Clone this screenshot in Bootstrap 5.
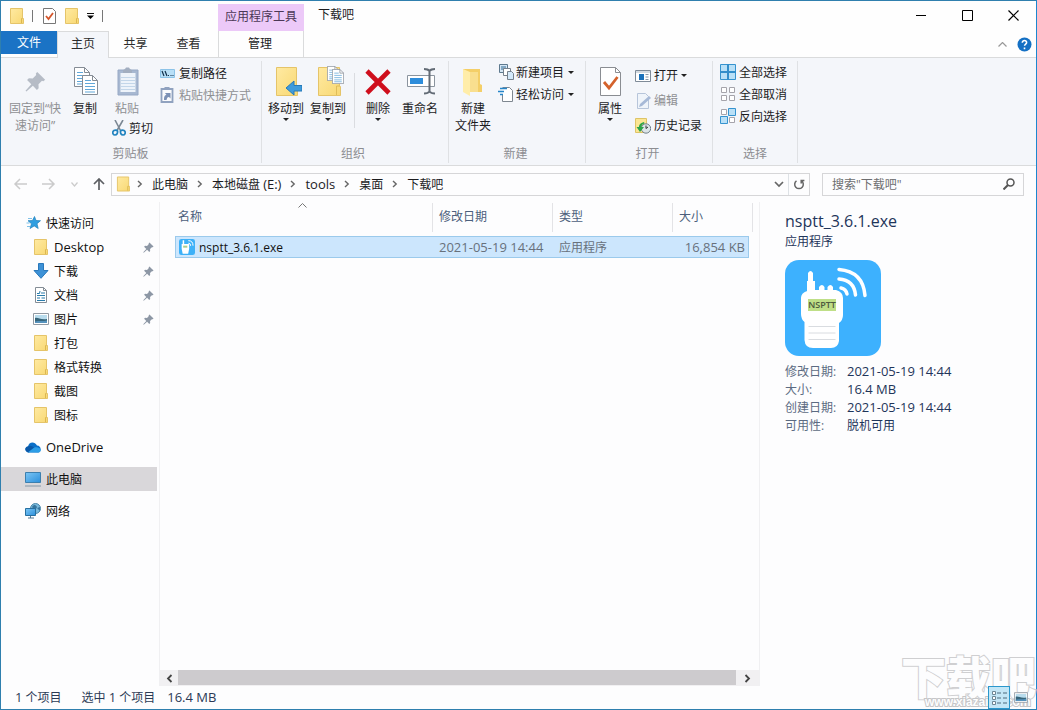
<!DOCTYPE html>
<html lang="zh-CN">
<head>
<meta charset="utf-8">
<meta name="viewport" content="width=device-width, initial-scale=1">
<title>下载吧</title>
<link rel="stylesheet" href="https://cdn.jsdelivr.net/npm/bootstrap@5.3.0/dist/css/bootstrap.min.css">
<style>
  body { font: 12px/17px "Open Sans", "Noto Sans CJK SC", sans-serif; color: #1c1c1e; background: #fdfdfe; }
  svg { display: block; flex: none; }
  button, input { font: inherit; }
  a { color: inherit; text-decoration: none; }
  .latin { font-size: 13px; }
  .window { border: 1px solid #2f7fae; border-right-color: #1b87d0; }
  .plain { border: 0; background: none; padding: 0; color: inherit; }
  .plain:disabled { color: #8f9093; }
  .plain:disabled svg { opacity: .6; }

  /* title bar and tabs */
  .top-grid { display: grid; grid-template-columns: 217px 86px 1fr; grid-template-rows: 30px 27px; background: #fefefe; }
  .quick { padding: 0 8px; gap: 8px; }
  .quick i { width: 1px; height: 12px; background: #777; }
  .quick i + button { margin-left: 2px; }
  .context-title { background: #ecc9f8; margin-top: 3px; padding-top: 4px; color: #4b3856; white-space: nowrap; }
  .caption-text { padding: 5px 0 0 14px; }
  .tabs { border-bottom: 1px solid #dadbdc; }
  .tabs .nav-link { padding: 4px 0; border: 0; border-radius: 0; width: 53px; text-align: center; color: #2b2b2b; }
  .tabs .file { width: 56px; background: #1b73c5; color: #fff; height: 23px; padding-top: 3px; }
  .tabs .nav-link.active { width: 52px; margin-bottom: -1px; background: #f4f6fa; color: #2b2b2b; border: 1px solid #dadbdc; border-bottom: 0; padding-top: 3px; }
  .manage { border: 1px solid #dadbdc; border-top: 0; text-align: center; padding: 4px 2px 0 0; }
  .tools { gap: 10px; padding-right: 4px; }
  .win-btn { width: 46px; height: 28px; display: grid; place-items: center; }

  /* ribbon */
  .ribbon { background: #f4f6fa; border-bottom: 1px solid #dadbdc; height: 108px; }
  .rgroup { border-right: 1px solid #dfe1e4; margin: 3px 0 2px; display: flex; flex-direction: column; }
  .rgroup > footer { text-align: center; color: #8c8d91; margin: auto 0 0 -4px; padding-bottom: 1px; }
  .w-clip { width: 261px; padding-left: 3px; } .w-org { width: 187px; padding-left: 3px; }
  .w-new { width: 137px; padding-left: 1px; } .w-open { width: 127px; padding-left: 1px; } .w-sel { width: 85px; padding-left: 7px; }
  .w-org > footer, .w-sel > footer { margin-left: -7px; }
  .big { display: flex; flex-direction: column; align-items: center; padding-top: 5px; }
  .big svg.ico { margin-bottom: 2px; }
  .b62 { width: 62px; } .b38 { width: 38px; } .b46 { width: 46px; } .b42 { width: 42px; }
  .small-btn { display: flex; align-items: center; gap: 3px; height: 22px; white-space: nowrap; }
  .rows { margin-left: 2px; }
  .clip-rows { margin-left: 7px; padding-top: 1px; }
  .tall { padding-top: 2px; }
  .tall .small-btn { height: 25px; }
  .drop { width: 0; border: 3px solid transparent; border-top-color: #222; border-bottom: 0; }
  .big .drop { margin-top: 1px; }
  .small-btn .drop { margin-left: 4px; }
  .vline { width: 1px; height: 55px; margin: 12px 2px 0 5px; background: #dadce0; }

  /* address row */
  .addr-row { height: 36px; padding: 0 12px; }
  .nav-arrows { gap: 15px; padding-right: 6px; }
  .addr { border: 1px solid #d6d6d8; height: 23px; }
  .crumbs { gap: 9px; margin-left: 7px; }
  .search { width: 202px; border: 1px solid #d6d6d8; height: 23px; }
  .search input { border: 0; outline: 0; background: none; width: 160px; padding: 0 0 0 9px; }
  .search input::placeholder { color: #6e6e70; opacity: 1; }

  /* navigation tree */
  .tree { width: 159px; border-right: 1px solid #f0f0f2; padding-top: 9px; }
  .tree a { display: flex; align-items: center; height: 24px; gap: 5px; padding-left: 24px; margin-right: 2px; color: #111; }
  .tree a.sub { padding-left: 32px; }
  .tree a.root { margin-top: 8px; }
  .tree a.sel { background: #d9d7da; }
  .tree .pin { margin-left: auto; margin-right: 3px; }

  /* file list */
  .files { width: 574px; margin-left: 15px; border-collapse: separate; border-spacing: 0; table-layout: fixed; }
  .files th { font-weight: 400; color: #4c5f7c; height: 34px; padding: 1px 0 0; vertical-align: top; position: relative; }
  .files th div { height: 29px; border-right: 1px solid #e3e3e6; padding: 5px 0 0 6px; }
  .files th:first-child div { padding-left: 3px; }
  .files th:last-child div { margin-right: -4px; }
  .files td { background: #cce6fd; border: solid #9bcaec; border-width: 1px 0; height: 22px; padding: 0 0 0 6px; color: #68717c; }
  .files td:first-child { border-left-width: 1px; padding-left: 3px; color: #111; }
  .files td:last-child { border-right-width: 1px; padding: 0 3px 0 0; text-align: right; }
  .col-mid { width: 120px; } .col-size { width: 76px; }
  .sort { position: absolute; left: 123px; top: 1px; }
  .scroll { height: 16px; background: #f1f0f2; }
  .scroll span { background: #cdcbce; height: 15px; }
  .scroll button { width: 18px; display: grid; place-items: center; }

  .details { width: 277px; border-left: 1px solid #f0f0f2; padding: 8px 0 0 25px; color: #1f355a; }
  .details h1 { font-size: 16px; line-height: 23px; margin: 0; }
  .app-kind { margin-bottom: 10px; }
  .details dl { display: grid; grid-template-columns: 62px 1fr; line-height: 18px; margin: 7px 0 0; }
  .details dt { font-weight: 400; color: #5c6b82; } .details dd { margin: 0; }
  .details dd.latin { line-height: 16px; }

  .status { height: 23px; color: #2b3a55; padding-left: 14px; }
  .view-btn { width: 22px; height: 23px; display: grid; place-items: center; }
  .view-btn.on { background: #c3e6f6; border: 1px solid #2a97cc; }
  .mark-box { position: absolute; right: 0; bottom: 0; width: 135px; height: 66px; pointer-events: none; }
  .mark-big { position: absolute; left: 0; top: 0; font: 900 45px/66px "Noto Sans CJK SC", sans-serif; color: #fdfdfe; -webkit-text-stroke: 2px #cfcfd1; paint-order: stroke fill; white-space: nowrap; }
  .mark-url { position: absolute; left: 24px; bottom: 0; font: 700 12px/14px "Liberation Sans", sans-serif; color: #fdfdfe; -webkit-text-stroke: 2px #c6c6c8; paint-order: stroke fill; }
  .view-btns { position: relative; margin-right: 4px; }
</style>
</head>
<body>
<svg width="0" height="0" class="position-absolute" aria-hidden="true">
  <defs>
    <linearGradient id="fg" x1="0" y1="0" x2="1" y2="1"><stop offset="0" stop-color="#ffeaa2"/><stop offset="1" stop-color="#f8d873"/></linearGradient>
    <linearGradient id="sg" x1="0" y1="0" x2="1" y2="1"><stop offset="0" stop-color="#7cc6f5"/><stop offset="1" stop-color="#2b8fdb"/></linearGradient>
    <symbol id="folder" viewBox="0 0 16 16"><path d="M1.500 .5h12v10h1v5h-13z" fill="url(#fg)" stroke="#e5c469"/><path d="M12.500 15v-4.500h1" fill="none" stroke="#dcb750"/></symbol>
    <symbol id="pin" viewBox="0 0 12 12"><path d="M7 .5 11.500 5l-1 .8-.8-.2-2 2 .1 2.200-1 1-2.300-2.400L.8 11.700l-.5-.4 3.300-3.800L1.200 5.200l1-1 2.200.1 2-2-.2-.9z" fill="#8d97a5"/></symbol>
    <symbol id="chev" viewBox="0 0 6 8"><path d="M1 1l3.200 3L1 7" fill="none" stroke="#666" stroke-width="1.400"/></symbol>
    <symbol id="page" viewBox="0 0 16 20"><path d="M.5.5h10l5 5v14H.5z" fill="#fff" stroke="#858c95"/><path d="M10.500.5v5h5" fill="none" stroke="#858c95"/><path d="M3 5.500h6M3 8.500h10M3 11.500h10M3 14.500h10M3 17h10" stroke="#61a7d8"/></symbol>
    <symbol id="photo" viewBox="0 0 16 12"><path d="M.5.5h15v11H.5z" fill="#fff" stroke="#929aa3"/><path d="M2 2h12v8H2z" fill="#b9dced"/><path d="M2 5c3-1 5 2 12 1v4H2z" fill="#37657a"/><path d="M2 8.500c4-1 8 0 12-1V10H2z" fill="#5592bd"/></symbol>
  </defs>
</svg>

<div class="window d-flex flex-column vh-100 position-relative">
  <header class="top-grid">
    <div class="quick d-flex align-items-center">
      <svg width="15" height="16"><use href="#folder" width="16" height="16"/></svg>
      <i></i>
      <button class="plain" aria-label="属性"><svg width="13" height="16" viewBox="0 0 13 16"><path d="M.5.5h9l3 3v12H.5z" fill="#fff" stroke="#777"/><path d="M3 8l2.500 3L10 5" fill="none" stroke="#d4552a" stroke-width="1.800"/></svg></button>
      <button class="plain" aria-label="新建文件夹"><svg width="15" height="16"><use href="#folder" width="16" height="16"/></svg></button>
      <button class="plain" aria-label="自定义"><svg width="7" height="6"><path d="M0 .5h7" stroke="#111"/><path d="M0 2.500h7L3.500 6z"/></svg></button>
      <i></i>
    </div>
    <div class="context-title text-center">应用程序工具</div>
    <div class="d-flex justify-content-between">
      <span class="caption-text">下载吧</span>
      <div class="d-flex">
        <button class="plain win-btn" aria-label="最小化"><svg width="11" height="11"><path d="M0 5.500h10" stroke="#000"/></svg></button>
        <button class="plain win-btn" aria-label="最大化"><svg width="11" height="11"><path d="M.5.5h10v10H.5z" fill="none" stroke="#000"/></svg></button>
        <button class="plain win-btn" aria-label="关闭"><svg width="11" height="11"><path d="M.5.5l10 10m0-10l-10 10" stroke="#000" stroke-width="1.200"/></svg></button>
      </div>
    </div>
    <nav class="tabs nav">
      <a class="nav-link file" href="#">文件</a><a class="nav-link active" href="#">主页</a><a class="nav-link" href="#">共享</a><a class="nav-link" href="#">查看</a>
    </nav>
    <a class="manage" href="#">管理</a>
    <div class="tabs tools d-flex justify-content-end align-items-center">
      <button class="plain" aria-label="折叠功能区"><svg width="9" height="5"><path d="M.5 4.500l4-4 4 4" fill="none" stroke="#999" stroke-width="1.200"/></svg></button>
      <button class="plain" aria-label="帮助"><svg width="15" height="15"><circle cx="7.500" cy="7.500" r="7" fill="#1470c4"/><path d="M5.300 5.700c0-3 4.500-2.700 4.300-.1-.1 1.500-2 1.500-2 3.200M7.500 10.500v1.700" stroke="#fff" stroke-width="1.600" fill="none"/></svg></button>
    </div>
  </header>

  <section class="ribbon d-flex" aria-label="功能区">
    <div class="rgroup w-clip">
      <div class="d-flex">
        <button class="plain big b62" disabled><svg class="ico" width="32" height="32" viewBox="0 0 32 32"><use href="#pin" x="6" y="5" width="21" height="21"/></svg>固定到“快<br>速访问”</button>
        <button class="plain big b38"><svg class="ico" width="32" height="32" viewBox="0 0 32 32"><use href="#page" x="5" y="1" width="16" height="20"/><use href="#page" x="13" y="9" width="16" height="20"/></svg>复制</button>
        <div>
          <button class="plain big b46" disabled><svg class="ico" width="32" height="32" viewBox="0 0 32 32"><path d="M7 4h20v25H7z" fill="#7590b6" stroke="#5b77a2"/><path d="M9.500 7h15v19h-15z" fill="#eaf2fb"/><path d="M12 5c0-2 2-1 3-3.500h3c1 2.500 3 1.500 3 3.500v2h-9z" fill="#6c7f9b"/><path d="M10 11.500h14M10 14.500h14M10 17.500h14M10 20.500h14M10 23.500h14" stroke="#a4c1df"/></svg>粘贴</button>
          <button class="plain small-btn ms-2"><svg width="14" height="16" viewBox="0 0 14 16"><path d="M3 0l5.500 10.500M11 0L5 10.500" stroke="#7b8793" stroke-width="1.600"/><path d="M1 11.500c1-2 4-1.500 4.500-.5.300 2-.5 4-2.500 4s-2.500-2-2-3.500zm12 0c-1-2-4-1.500-4.500-.5-.3 2 .5 4 2.500 4s2.500-2 2-3.500z" fill="none" stroke="#2183bf" stroke-width="1.700"/></svg>剪切</button>
        </div>
        <div class="clip-rows">
          <button class="plain small-btn"><svg width="16" height="9"><path d="M.5.5h14v8H.5z" fill="#b8dff7" stroke="#8cc3e8"/><path d="M2 2l2 5M5 2l2 5M8 6.500h1M10.500 6.500h1M12.500 6.500h1" stroke="#12314d" stroke-width="1.200"/></svg>复制路径</button>
          <button class="plain small-btn" disabled><svg width="16" height="16"><path d="M1.500 2h11v13h-11z" fill="#fff" stroke="#4f6b98" stroke-width="1.800"/><path d="M4.500 0h5v3h-5z" fill="#4f6b98"/><path d="M4 13c0-4 1-5 2.500-5L5 6h5.500v5.500L9 10c-2 0-2 1.500-2.500 3z" fill="#2d4f88"/></svg>粘贴快捷方式</button>
        </div>
      </div>
      <footer>剪贴板</footer>
    </div>

    <div class="rgroup w-org">
      <div class="d-flex">
        <button class="plain big b42"><svg class="ico" width="32" height="32" viewBox="0 0 32 32"><path d="M6.500 1.500h20v19h1v9h-21z" fill="url(#fg)" stroke="#e5c469"/><path d="M16 22l8-7v4.500h8v5.500h-8v4z" fill="#3f9bdb" stroke="#2679b8"/></svg>移动到<span class="drop"></span></button>
        <button class="plain big b42"><svg class="ico" width="32" height="32" viewBox="0 0 32 32"><path d="M6.500 1.500h21v19h1v9h-22z" fill="url(#fg)" stroke="#e5c469"/><path d="M24.500 29v-9h3" fill="none" stroke="#e0bd58"/><use href="#page" x="15" y="0" width="12" height="15"/><use href="#page" x="20" y="3" width="12" height="15"/></svg>复制到<span class="drop"></span></button>
        <div class="vline"></div>
        <button class="plain big b42"><svg class="ico" width="32" height="32" viewBox="0 0 32 32"><path d="M5 5l22 22M27 5L5 27" stroke="#cf0e1c" stroke-width="4.600"/></svg>删除<span class="drop"></span></button>
        <button class="plain big b42"><svg class="ico" width="32" height="32" viewBox="0 0 32 32"><path d="M3.500 9.500h27v11h-27z" fill="#fff" stroke="#8b949e"/><path d="M6 12h13v6H6z" fill="#2e8ddb"/><path d="M20 3c3 0 4 0 5.500 2C27 3 28 3 31 3M25.500 4v22M20 27.500c3 0 4 0 5.500-2 1.500 2 2.500 2 5.500 2" stroke="#626b75" stroke-width="2" fill="none"/></svg>重命名</button>
      </div>
      <footer>组织</footer>
    </div>

    <div class="rgroup w-new">
      <div class="d-flex">
        <button class="plain big b46"><svg class="ico" width="32" height="32" viewBox="0 0 32 32"><path d="M6 3h17v15l2 1v7H11z" fill="#f4cf68"/><path d="M6 3l7 3v24l-7-4z" fill="#ffeda9"/><path d="M13 6h8v20h-8z" fill="#f9df8f"/></svg>新建<br>文件夹</button>
        <div class="rows">
          <button class="plain small-btn gap-0"><svg width="18" height="17" viewBox="0 0 18 17"><path d="M1.500.5h8v8h-8z" fill="#d5e6f4" stroke="#5d798e"/><path d="M3 3h5M3 5h3" stroke="#316b93"/><path d="M5.500 4.500h7v7h-7z" fill="#fff" stroke="#76818c"/><path d="M9.500 7.500h4l2 2v6h-6z" fill="#d4e9fa" stroke="#76818c"/></svg>新建项目<span class="drop"></span></button>
          <button class="plain small-btn gap-0"><svg width="18" height="17" viewBox="0 0 18 17"><path d="M4.500 1.500h7l3 3v11h-10V9" fill="#fff" stroke="#7e8790"/><path d="M2 2.500h7M0 5.500h6M2 8.500h3" stroke="#2686c9" stroke-width="1.500"/></svg>轻松访问<span class="drop"></span></button>
        </div>
      </div>
      <footer>新建</footer>
    </div>

    <div class="rgroup w-open">
      <div class="d-flex">
        <button class="plain big b46"><svg class="ico" width="32" height="32" viewBox="0 0 32 32"><path d="M6.500 1.500h15l5 5v23h-20z" fill="#fff" stroke="#8a8d92"/><path d="M21.500 1.500v5h5" fill="none" stroke="#8a8d92"/><path d="M10 16l5 6 8.500-11" fill="none" stroke="#d4622c" stroke-width="2.800"/></svg>属性<span class="drop"></span></button>
        <div class="tall rows">
          <button class="plain small-btn"><svg width="16" height="12"><path d="M.5.5h15v11H.5z" fill="#fff" stroke="#7f8b98"/><path d="M1 2h14" stroke="#a8b5c2"/><path d="M4 4h5v6H4z" fill="#1c72ba"/><path d="M10.500 4.500h3M10.500 7h3M10.500 9.500h3" stroke="#8795a4"/></svg>打开<span class="drop ms-0"></span></button>
          <button class="plain small-btn" disabled><svg width="16" height="16"><path d="M2.500.5h8l3 3v12h-11z" fill="#edf4fb" stroke="#90a6c6"/><path d="M4 14l1-3 9-8 2 2-9 8z" fill="#7492c0"/></svg>编辑</button>
          <button class="plain small-btn"><svg width="16" height="16"><path d="M.5.5h11v14H.5z" fill="#fbe693" stroke="#dec467"/><circle cx="11" cy="10.500" r="4.700" fill="#dce5e8" stroke="#71808a"/><path d="M11 7.500v3l2-1.500" stroke="#333" fill="none"/><path d="M9 4C5 5 4 7 4 9H1.500L5 14l4-5H6.500c0-2 1-3 3-3.500z" fill="#2da449"/></svg>历史记录</button>
        </div>
      </div>
      <footer>打开</footer>
    </div>

    <div class="rgroup w-sel">
      <div>
        <button class="plain small-btn"><svg width="16" height="16"><path d="M.5.5h15v15H.5z" fill="#b9e0f7" stroke="#3593cf"/><path d="M8 0v16M0 8h16" stroke="#318dca" stroke-width="2"/></svg>全部选择</button>
        <button class="plain small-btn"><svg width="16" height="16"><path d="M1.500 1.500h5v5h-5zm8 0h5v5h-5zm-8 8h5v5h-5zm8 0h5v5h-5z" fill="#fff" stroke="#a5a4ab"/></svg>全部取消</button>
        <button class="plain small-btn"><svg width="16" height="16"><path d="M1.500 1.500h5v5h-5zm8 8h5v5h-5z" fill="#fff" stroke="#a5a4ab"/><path d="M8.500.5h7v7h-7zm-8 8h7v7h-7z" fill="#b9e0f7" stroke="#3593cf"/></svg>反向选择</button>
      </div>
      <footer>选择</footer>
    </div>
  </section>

  <div class="addr-row d-flex align-items-center">
    <div class="nav-arrows d-flex align-items-center">
      <button class="plain" disabled aria-label="后退"><svg width="14" height="12"><path d="M7 1L2 6l5 5M2 6h12" fill="none" stroke="#aaa" stroke-width="1.500"/></svg></button>
      <button class="plain" disabled aria-label="前进"><svg width="14" height="12"><path d="M7 1l5 5-5 5M12 6H0" fill="none" stroke="#aaa" stroke-width="1.500"/></svg></button>
      <button class="plain" disabled aria-label="最近位置"><svg width="7" height="5"><path d="M.5.5l3 3.500 3-3.500" fill="none" stroke="#aaa" stroke-width="1.200"/></svg></button>
      <button class="plain" aria-label="上移"><svg width="12" height="12"><path d="M1 6l5-5 5 5M6 1v11" fill="none" stroke="#5d5f63" stroke-width="1.700"/></svg></button>
    </div>
    <div class="addr d-flex align-items-center flex-grow-1 me-1">
      <svg class="ms-1" width="14" height="16"><use href="#folder" width="15" height="16"/></svg>
      <nav class="crumbs d-flex align-items-center flex-grow-1">
        <svg width="6" height="8"><use href="#chev"/></svg><a href="#">此电脑</a>
        <svg width="6" height="8"><use href="#chev"/></svg><a href="#">本地磁盘 <span class="latin">(E:)</span></a>
        <svg width="6" height="8"><use href="#chev"/></svg><a href="#" class="latin">tools</a>
        <svg width="6" height="8"><use href="#chev"/></svg><a href="#">桌面</a>
        <svg width="6" height="8"><use href="#chev"/></svg><a href="#">下载吧</a>
      </nav>
      <button class="plain px-1" aria-label="历史"><svg width="10" height="7"><path d="M1 1l4 4 4-4" fill="none" stroke="#666" stroke-width="1.700"/></svg></button>
      <button class="plain border-start px-1 h-100" aria-label="刷新"><svg width="12" height="12"><path d="M3.500 2.800A4.300 4.300 0 1 0 8.500 2.800M8.200 5.500V2.500h3.200" fill="none" stroke="#666" stroke-width="1.500"/></svg></button>
    </div>
    <label class="search d-flex align-items-center justify-content-between ms-2 pe-2">
      <input type="text" placeholder="搜索&quot;下载吧&quot;" aria-label="搜索">
      <svg width="12" height="12"><circle cx="7.500" cy="4.500" r="3.500" fill="none" stroke="#555" stroke-width="1.500"/><path d="M5 7L.5 11.500" stroke="#555" stroke-width="2"/></svg>
    </label>
  </div>

  <main class="d-flex flex-grow-1">
    <nav class="tree flex-shrink-0">
      <a href="#"><svg width="16" height="16"><path d="M9.500 1.500l1.500 4 4.500.2-3.500 3 1.200 4.800-4-2.600L5 13.500l1.500-4.700L3 5.700l4.500-.2z" fill="#2f9ee0" stroke="#1f7fba" stroke-width=".7"/><path d="M3 3.500h4M1.500 8h3M2 11.500h3" stroke="#7fc1e8"/></svg>快速访问</a>
      <a class="sub" href="#"><svg width="16" height="16"><use href="#folder"/></svg><span class="latin">Desktop</span><svg class="pin" width="11" height="11"><use href="#pin"/></svg></a>
      <a class="sub" href="#"><svg width="16" height="16"><path d="M5.500.5h5v7h4.500L8 15.300 1 7.500h4.500z" fill="#3d91d6" stroke="#2978bb"/></svg>下载<svg class="pin" width="11" height="11"><use href="#pin"/></svg></a>
      <a class="sub" href="#"><svg width="16" height="16"><path d="M2.500.5h8l3 3v12h-11z" fill="#fff" stroke="#848d96"/><path d="M10.500.5v3h3" fill="none" stroke="#848d96"/><path d="M4 6.500h2.500L7 4M8 6h4M4 8.500h8M4 11h3M8.500 11h3.500M4 13.500h8" fill="none" stroke="#287bab"/></svg>文档<svg class="pin" width="11" height="11"><use href="#pin"/></svg></a>
      <a class="sub" href="#"><svg width="16" height="12"><use href="#photo"/></svg>图片<svg class="pin" width="11" height="11"><use href="#pin"/></svg></a>
      <a class="sub" href="#"><svg width="16" height="16"><use href="#folder"/></svg>打包</a>
      <a class="sub" href="#"><svg width="16" height="16"><use href="#folder"/></svg>格式转换</a>
      <a class="sub" href="#"><svg width="16" height="16"><use href="#folder"/></svg>截图</a>
      <a class="sub" href="#"><svg width="16" height="16"><use href="#folder"/></svg>图标</a>
      <a class="root" href="#"><svg width="16" height="12"><path d="M3.500 11.500C-.5 11-.8 6 3 5.500 3.500 1 9.500-.5 12 4.500c4 0 5 5.500 1.500 7z" fill="#0b6fc8"/><path d="M3 5.500C5 4 7 5 9 6.500L4 11.500C-.5 11-.8 6 3 5.500z" fill="#0a58a8"/><path d="M3 11.300L9 6.700c3-1.200 6 0 6.800 2 0 1.500-1 2.800-2.300 2.800z" fill="#2c9de6"/></svg><span class="latin">OneDrive</span></a>
      <a class="root sel" href="#"><svg width="16" height="15"><path d="M.5.5h15v10H.5z" fill="url(#sg)" stroke="#3c7fae"/><path d="M0 14h16" stroke="#8296a5"/></svg>此电脑</a>
      <a class="root" href="#"><svg width="16" height="16"><circle cx="10.500" cy="5.500" r="5" fill="#79b9dc" stroke="#4b86a8"/><path d="M7 4c2-3 4-2 5 0l-2 4zM12 5l3-1v4z" fill="#36759d"/><path d="M.5 5.500h10v7H.5z" fill="url(#sg)" stroke="#276f9f"/><path d="M3 15h6M5.500 13v2" stroke="#527993"/></svg>网络</a>
    </nav>

    <section class="flex-grow-1 d-flex flex-column">
      <table class="files">
        <colgroup><col><col class="col-mid"><col class="col-mid"><col class="col-size"></colgroup>
        <thead><tr>
          <th><svg class="sort" width="9" height="5"><path d="M.5 4.500l4-4 4 4" fill="none" stroke="#777"/></svg><div>名称</div></th>
          <th><div>修改日期</div></th><th><div>类型</div></th><th><div>大小</div></th>
        </tr></thead>
        <tbody><tr>
          <td><span class="d-flex align-items-center gap-1"><svg width="16" height="16" viewBox="0 0 96 96"><rect width="96" height="96" rx="14" fill="#3db1f8"/><path d="M22 30V8h9v22h30v28l-6 30H22L16 58V30z" fill="#fff"/><path d="M56 10q28 0 28 30M56 25q14 0 14 16" stroke="#fff" stroke-width="6" fill="none"/><path d="M25 40h25v12H25z" fill="#a9ce8f"/></svg><span>nsptt_3.6.1.exe</span></span></td>
          <td class="latin">2021-05-19 14:44</td><td>应用程序</td><td class="latin">16,854 KB</td>
        </tr></tbody>
      </table>
      <div class="scroll d-flex mt-auto">
        <button class="plain" aria-label="向左滚动"><svg width="7" height="9"><path d="M5.500 1L2 4.500 5.500 8" fill="none" stroke="#444" stroke-width="1.800"/></svg></button>
        <span class="flex-grow-1"></span>
        <button class="plain px-2 w-auto me-0" aria-label="向右滚动"><svg width="7" height="9"><path d="M1.500 1L5 4.500 1.500 8" fill="none" stroke="#444" stroke-width="1.800"/></svg></button>
      </div>
    </section>

    <aside class="details flex-shrink-0">
      <h1 class="fw-normal">nsptt_3.6.1.exe</h1>
      <div class="app-kind">应用程序</div>
      <svg width="96" height="96" viewBox="0 0 96 96" role="img" aria-label="NSPTT">
        <rect width="96" height="96" rx="14" fill="#3db1fe"/>
        <path d="M22 33V21h1V13q2.500-4 5 0v8h2v9h4v-3q3-4 5.500 0v3h3v-3q3-4 5.500 0v3h3q7 2 7 8v17q0 5-4 8v18q-1 7-8 7H28q-8 0-8.500-8V62q-3.500-3-3.500-8V38q0-5 6-7z" fill="#fff"/>
        <path d="M54 9.500q24 2 26 26M54 19q15 1 16.500 16M56 28q5 1 6 6" fill="none" stroke="#fff" stroke-width="3.500" stroke-linecap="round"/>
        <path d="M23 39h28v12H23z" fill="#bfdf87"/>
        <text x="37" y="48" text-anchor="middle" font-family="Open Sans, sans-serif" font-weight="600" font-size="9" fill="#4e5a3e">NSPTT</text>
        <path d="M23.500 66.500h27M23.500 73h27M23.500 79.500h27" stroke="#d9dce0"/>
      </svg>
      <dl>
        <dt>修改日期:</dt><dd class="latin">2021-05-19 14:44</dd>
        <dt>大小:</dt><dd class="latin">16.4 MB</dd>
        <dt>创建日期:</dt><dd class="latin">2021-05-19 14:44</dd>
        <dt>可用性:</dt><dd>脱机可用</dd>
      </dl>
    </aside>
  </main>

  <footer class="status d-flex align-items-center">
    <div class="mark-box"><div class="mark-big">下载吧</div><div class="mark-url">www.xiazaiba.com</div></div>
    <span><span class="latin">1</span> 个项目</span>
    <span class="ms-3 ps-1">选中 <span class="latin">1</span> 个项目</span>
    <span class="ms-2 ps-1 latin">16.4 MB</span>
    <div class="view-btns d-flex ms-auto">
      <button class="plain view-btn on" aria-label="详细信息"><svg width="16" height="14"><path d="M1.500.5h3v3h-3zm0 5h3v3h-3zm0 5h3v3h-3z" fill="#fff" stroke="#6d8694"/><path d="M6 2h4M12 2h4M6 7h4M12 7h4M6 12h4M12 12h4" stroke="#4c6b7c"/></svg></button>
      <button class="plain view-btn" aria-label="大图标"><svg width="14" height="11"><use href="#photo" width="14" height="11"/></svg></button>
    </div>
  </footer>
</div>
<script src="https://cdn.jsdelivr.net/npm/bootstrap@5.3.0/dist/js/bootstrap.bundle.min.js"></script>
</body>
</html>
